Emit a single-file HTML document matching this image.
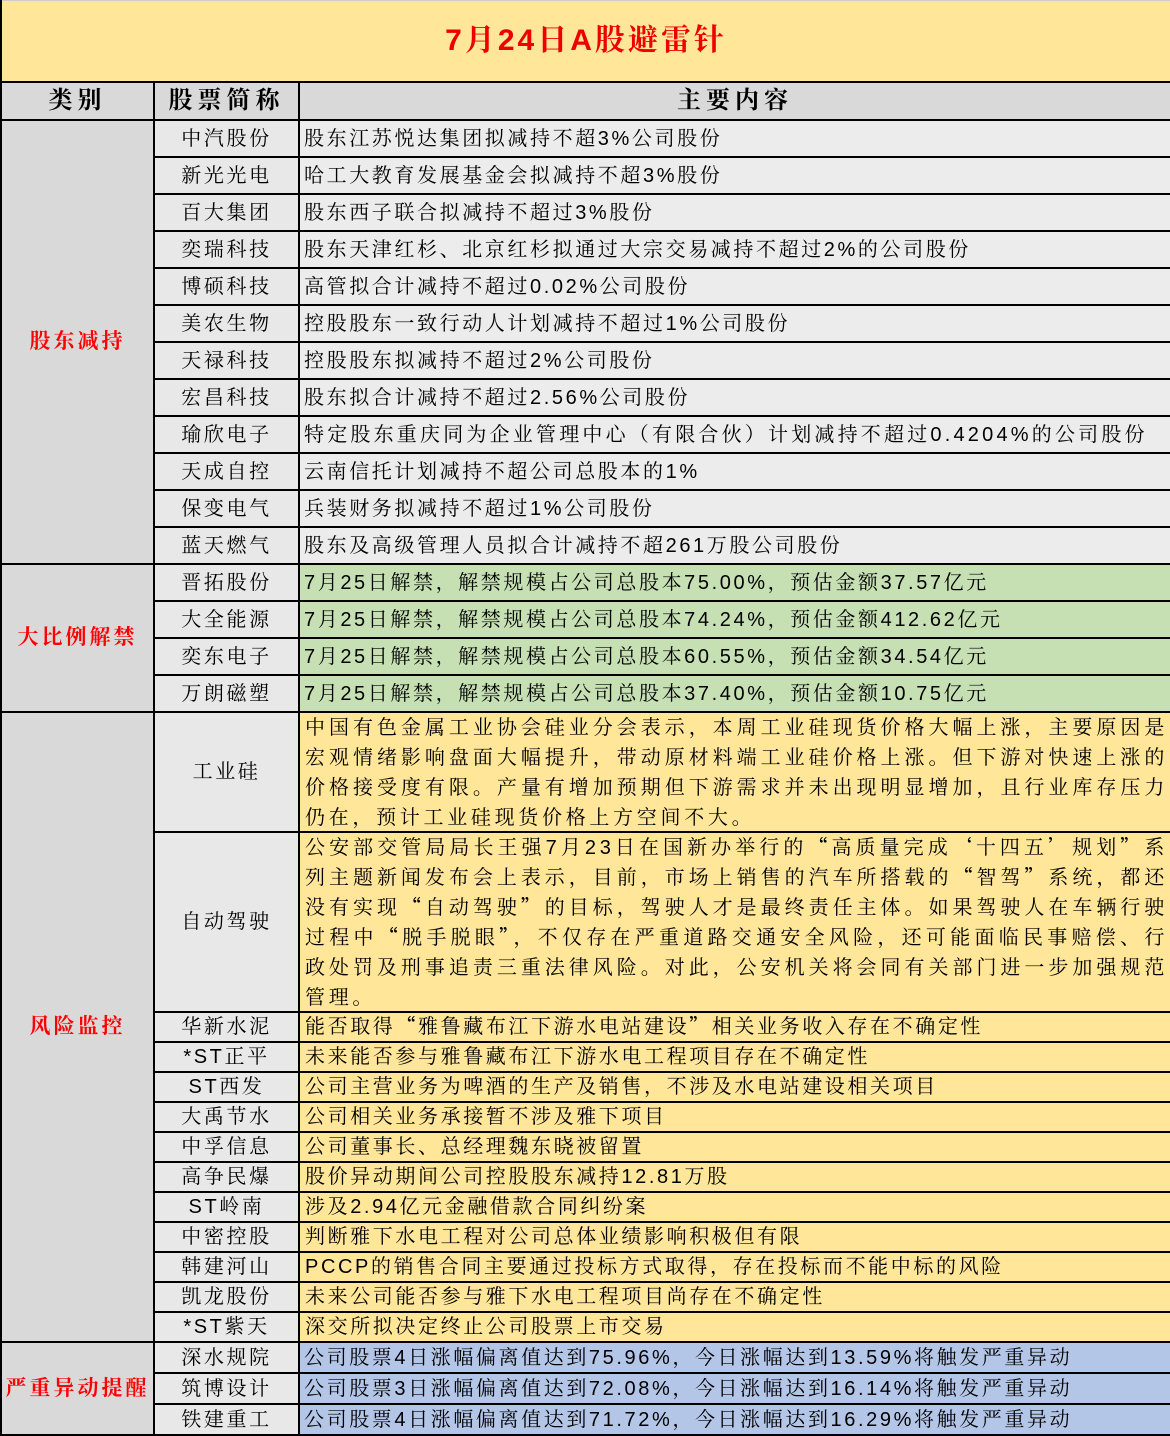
<!DOCTYPE html>
<html><head><meta charset="utf-8"><style>
body{margin:0;width:1170px;height:1435px;overflow:hidden;background:#fff;font-family:"Liberation Sans","Noto Serif CJK SC","Noto Sans CJK SC",serif;}
table{border-collapse:collapse;table-layout:fixed;width:1170px;}
td{border:2px solid #000;padding:0;font-size:20px;line-height:24px;color:#000;letter-spacing:2.6px;white-space:nowrap;overflow:hidden;}
.q{font-family:"Noto Sans CJK SC",sans-serif;line-height:20px;}
.t{background:#ffe699;height:80px;text-align:center;color:#e00;font-size:30px;line-height:34px;font-weight:bold;letter-spacing:3px;border-top:1px solid #ccc;}
.h td{background:#d9d9d9;height:36px;text-align:center;font-size:24px;font-weight:bold;letter-spacing:5px;}
.c{background:#d9d9d9;color:#f00;text-align:center;font-weight:bold;font-size:21px;letter-spacing:3px;}
.n{background:#e8e8e8;text-align:center;}
.w{background:#ececec;padding-left:4px;}
.g{background:#c6e0b4;padding-left:4px;}
.y{background:#ffe699;padding-left:5px;}
.b{background:#b4c6e7;padding-left:4px;}
.m{white-space:normal;line-height:30px;text-align:justify;letter-spacing:3.7px;vertical-align:top;padding-right:2px;}
.m div{overflow:hidden;}
.r37 td{height:35px}
.r30 td{height:28px}
.r31 td{height:29px}
</style></head><body>
<table>
<colgroup><col style="width:153px"><col style="width:145px"><col style="width:872px"></colgroup>
<tr><td class="t" colspan="3">7月24日A股避雷针</td></tr>
<tr class="h"><td>类别</td><td>股票简称</td><td>主要内容</td></tr>
<tr class="r37"><td class="c" rowspan="12">股东减持</td><td class="n">中汽股份</td><td class="w">股东江苏悦达集团拟减持不超3%公司股份</td></tr>
<tr class="r37"><td class="n">新光光电</td><td class="w">哈工大教育发展基金会拟减持不超3%股份</td></tr>
<tr class="r37"><td class="n">百大集团</td><td class="w">股东西子联合拟减持不超过3%股份</td></tr>
<tr class="r37"><td class="n">奕瑞科技</td><td class="w">股东天津红杉、北京红杉拟通过大宗交易减持不超过2%的公司股份</td></tr>
<tr class="r37"><td class="n">博硕科技</td><td class="w">高管拟合计减持不超过0.02%公司股份</td></tr>
<tr class="r37"><td class="n">美农生物</td><td class="w">控股股东一致行动人计划减持不超过1%公司股份</td></tr>
<tr class="r37"><td class="n">天禄科技</td><td class="w">控股股东拟减持不超过2%公司股份</td></tr>
<tr class="r37"><td class="n">宏昌科技</td><td class="w">股东拟合计减持不超过2.56%公司股份</td></tr>
<tr class="r37"><td class="n">瑜欣电子</td><td class="w" style="letter-spacing:3.2px">特定股东重庆同为企业管理中心（有限合伙）计划减持不超过0.4204%的公司股份</td></tr>
<tr class="r37"><td class="n">天成自控</td><td class="w">云南信托计划减持不超公司总股本的1%</td></tr>
<tr class="r37"><td class="n">保变电气</td><td class="w">兵装财务拟减持不超过1%公司股份</td></tr>
<tr class="r37"><td class="n">蓝天燃气</td><td class="w">股东及高级管理人员拟合计减持不超261万股公司股份</td></tr>
<tr class="r37"><td class="c" rowspan="4">大比例解禁</td><td class="n">晋拓股份</td><td class="g">7月25日解禁，解禁规模占公司总股本75.00%，预估金额37.57亿元</td></tr>
<tr class="r37"><td class="n">大全能源</td><td class="g">7月25日解禁，解禁规模占公司总股本74.24%，预估金额412.62亿元</td></tr>
<tr class="r37"><td class="n">奕东电子</td><td class="g">7月25日解禁，解禁规模占公司总股本60.55%，预估金额34.54亿元</td></tr>
<tr class="r37"><td class="n">万朗磁塑</td><td class="g">7月25日解禁，解禁规模占公司总股本37.40%，预估金额10.75亿元</td></tr>
<tr><td class="c" rowspan="13">风险监控</td><td class="n" style="height:118px">工业硅</td><td class="y m"><div style="height:118px">中国有色金属工业协会硅业分会表示，本周工业硅现货价格大幅上涨，主要原因是宏观情绪影响盘面大幅提升，带动原材料端工业硅价格上涨。但下游对快速上涨的价格接受度有限。产量有增加预期但下游需求并未出现明显增加，且行业库存压力仍在，预计工业硅现货价格上方空间不大。</div></td></tr>
<tr><td class="n" style="height:178px">自动驾驶</td><td class="y m"><div style="height:178px">公安部交管局局长王强7月23日在国新办举行的<span class="q">“</span>高质量完成<span class="q">‘</span>十四五<span class="q">’</span>规划<span class="q">”</span>系列主题新闻发布会上表示，目前，市场上销售的汽车所搭载的<span class="q">“</span>智驾<span class="q">”</span>系统，都还没有实现<span class="q">“</span>自动驾驶<span class="q">”</span>的目标，驾驶人才是最终责任主体。如果驾驶人在车辆行驶过程中<span class="q">“</span>脱手脱眼<span class="q">”</span>，不仅存在严重道路交通安全风险，还可能面临民事赔偿、行政处罚及刑事追责三重法律风险。对此，公安机关将会同有关部门进一步加强规范管理。</div></td></tr>
<tr class="r30"><td class="n">华新水泥</td><td class="y">能否取得<span class="q">“</span>雅鲁藏布江下游水电站建设<span class="q">”</span>相关业务收入存在不确定性</td></tr>
<tr class="r30"><td class="n">*ST正平</td><td class="y">未来能否参与雅鲁藏布江下游水电工程项目存在不确定性</td></tr>
<tr class="r30"><td class="n">ST西发</td><td class="y">公司主营业务为啤酒的生产及销售，不涉及水电站建设相关项目</td></tr>
<tr class="r30"><td class="n">大禹节水</td><td class="y">公司相关业务承接暂不涉及雅下项目</td></tr>
<tr class="r30"><td class="n">中孚信息</td><td class="y">公司董事长、总经理魏东晓被留置</td></tr>
<tr class="r30"><td class="n">高争民爆</td><td class="y">股价异动期间公司控股股东减持12.81万股</td></tr>
<tr class="r30"><td class="n">ST岭南</td><td class="y">涉及2.94亿元金融借款合同纠纷案</td></tr>
<tr class="r30"><td class="n">中密控股</td><td class="y">判断雅下水电工程对公司总体业绩影响积极但有限</td></tr>
<tr class="r30"><td class="n">韩建河山</td><td class="y">PCCP的销售合同主要通过投标方式取得，存在投标而不能中标的风险</td></tr>
<tr class="r30"><td class="n">凯龙股份</td><td class="y">未来公司能否参与雅下水电工程项目尚存在不确定性</td></tr>
<tr class="r30"><td class="n">*ST紫天</td><td class="y">深交所拟决定终止公司股票上市交易</td></tr>
<tr class="r31"><td class="c" rowspan="3">严重异动提醒</td><td class="n">深水规院</td><td class="b">公司股票4日涨幅偏离值达到75.96%，今日涨幅达到13.59%将触发严重异动</td></tr>
<tr class="r31"><td class="n">筑博设计</td><td class="b">公司股票3日涨幅偏离值达到72.08%，今日涨幅达到16.14%将触发严重异动</td></tr>
<tr class="r31"><td class="n">铁建重工</td><td class="b">公司股票4日涨幅偏离值达到71.72%，今日涨幅达到16.29%将触发严重异动</td></tr>
</table>
</body></html>
